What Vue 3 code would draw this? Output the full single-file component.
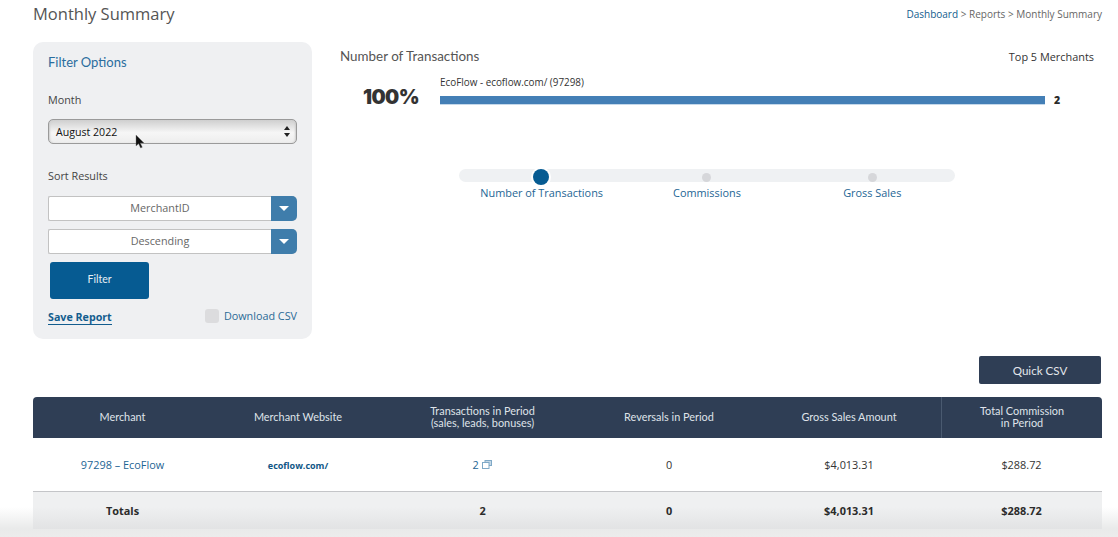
<template>
  <div class="page">
    <div class="fade"></div>
    <header class="top">
      <h1 class="page-title">Monthly Summary</h1>
      <div class="crumbs"><a>Dashboard</a> &gt; Reports &gt; Monthly Summary</div>
    </header>

    <section class="summary">
      <aside class="filter">
        <h2 class="filter-title">Filter Options</h2>
        <label class="field-label month-label">Month</label>
        <div class="month-select">
          <span>August 2022</span>
          <svg class="updown" width="6" height="11" viewBox="0 0 6 11">
            <path d="M3 0 6 4H0zM3 11 0 7h6z" fill="#222" />
          </svg>
          <svg class="cursor" width="10" height="15" viewBox="0 0 10 15">
            <path d="M1 0v11l2.6-2.3L5.6 13l1.7-.8-2-4.2H9z" fill="#111" stroke="#777" stroke-width=".4" />
          </svg>
        </div>
        <label class="field-label sort-label">Sort Results</label>
        <div v-for="s in sorts" :key="s" class="drop">
          <span class="drop-text">{{ s }}</span>
          <span class="drop-btn"><i class="tri"></i></span>
        </div>
        <button class="filter-btn">Filter</button>
        <div class="filter-foot">
          <a class="save">Save Report</a>
          <span class="csv"><i class="check"></i>Download CSV</span>
        </div>
      </aside>

      <div class="chart">
        <div class="chart-head">
          <h3 class="chart-title">Number of Transactions</h3>
          <span class="top-five">Top 5 Merchants</span>
        </div>
        <div class="bar-row">
          <div class="pct">100%</div>
          <div class="bar-wrap">
            <div class="bar-label">EcoFlow - ecoflow.com/ (97298)</div>
            <div class="bar-line">
              <div class="bar"></div>
              <b class="bar-num">2</b>
            </div>
          </div>
        </div>
        <div class="slider">
          <div class="track">
            <div v-for="(t, i) in tabs" :key="t" class="stop">
              <i :class="i === 0 ? 'dot on' : 'dot'"></i>
            </div>
          </div>
          <div class="stops">
            <a v-for="t in tabs" :key="t">{{ t }}</a>
          </div>
        </div>
      </div>
    </section>

    <div class="actions"><button class="quick">Quick CSV</button></div>

    <table class="report">
      <colgroup>
        <col style="width:179px" /><col style="width:172px" /><col style="width:197px" />
        <col style="width:176px" /><col style="width:184px" /><col style="width:161px" />
      </colgroup>
      <thead>
        <tr>
          <th>Merchant</th>
          <th>Merchant Website</th>
          <th>Transactions in Period<br />(sales, leads, bonuses)</th>
          <th>Reversals in Period</th>
          <th>Gross Sales Amount</th>
          <th class="last">Total Commission<br />in Period</th>
        </tr>
      </thead>
      <tbody>
        <tr>
          <td><a>97298 – EcoFlow</a></td>
          <td><a class="site">ecoflow.com/</a></td>
          <td>
            <a>2</a>
            <svg class="popout" width="10" height="9" viewBox="0 0 10 9" fill="none" stroke="#7fa9c7">
              <rect x="3" y=".5" width="6.5" height="5" fill="#c5d8e6" />
              <rect x=".5" y="2.5" width="6.5" height="6" fill="#fff" />
            </svg>
          </td>
          <td>0</td>
          <td>$4,013.31</td>
          <td>$288.72</td>
        </tr>
      </tbody>
      <tfoot>
        <tr>
          <td>Totals</td>
          <td></td>
          <td>2</td>
          <td>0</td>
          <td>$4,013.31</td>
          <td>$288.72</td>
        </tr>
      </tfoot>
    </table>
  </div>
</template>

<script setup>
const sorts = ['MerchantID', 'Descending']
const tabs = ['Number of Transactions', 'Commissions', 'Gross Sales']
</script>

<style>
html,
body {
  margin: 0;
  background: #fff;
  overflow: hidden;
}
</style>

<style scoped>
.page {
  height: 537px;
  box-sizing: border-box;
  padding: 0 16px 0 33px;
  font-family: "Open Sans", sans-serif;
  color: #333;
  overflow: hidden;
  position: relative;
}

.top {
  display: flex;
  justify-content: space-between;
  align-items: flex-start;
  height: 42px;
}

.page-title {
  margin: 3px 0 0;
  font-size: 16.5px;
  line-height: 22px;
  font-weight: 400;
  color: #555;
}

.crumbs {
  margin-top: 7px;
  font-size: 10px;
  line-height: 14px;
  color: #666;
}

.crumbs a {
  color: #135d8e;
}

.summary {
  display: flex;
  height: 297px;
}

.filter {
  width: 279px;
  box-sizing: border-box;
  padding: 11px 15px 0;
  background: #eff0f2;
  border-radius: 10px;
  flex-shrink: 0;
}

.filter-title {
  margin: 0;
  font-family: Lato, sans-serif;
  font-size: 13px;
  line-height: 18px;
  font-weight: 400;
  color: #2a6d9e;
}

.field-label {
  display: block;
  font-size: 10.8px;
  line-height: 14px;
  color: #444;
}

.month-label {
  margin-top: 22px;
}

.month-select {
  position: relative;
  display: flex;
  align-items: center;
  justify-content: space-between;
  height: 25px;
  margin-top: 12px;
  padding: 0 6px 0 7px;
  box-sizing: border-box;
  border: 1px solid #9a9a9a;
  border-radius: 5px;
  background: linear-gradient(#cfcfcf, #f6f6f6 55%, #ededed);
  box-shadow: inset 2px 0 2px -1px #ccc, inset -2px 0 2px -1px #ccc;
  font-size: 10.6px;
  color: #111;
}

.cursor {
  position: absolute;
  left: 86px;
  top: 15px;
}

.sort-label {
  margin-top: 25px;
  margin-bottom: 13px;
}

.drop {
  display: flex;
  height: 25px;
  margin-bottom: 8px;
  background: #fff;
  border: 1px solid #c2c2c2;
  border-right: 0;
  box-sizing: border-box;
  border-radius: 2px 5px 5px 2px;
}

.drop-text {
  flex: 1;
  text-align: center;
  font-size: 10.8px;
  line-height: 21px;
  color: #666;
}

.drop-btn {
  width: 26px;
  margin: -1px 0;
  display: flex;
  align-items: center;
  justify-content: center;
  background: #3f7dab;
  border-radius: 0 5px 5px 0;
}

.tri {
  border-left: 5px solid transparent;
  border-right: 5px solid transparent;
  border-top: 5px solid #fff;
}

.filter-btn {
  display: block;
  width: 99px;
  height: 37px;
  margin: 0 0 0 2px;
  padding: 0 0 3px;
  border: 0;
  border-radius: 3px;
  background: #065b92;
  color: #e8eef3;
  font-family: Lato, sans-serif;
  font-size: 10.5px;
}

.filter-foot {
  display: flex;
  justify-content: space-between;
  align-items: center;
  margin-top: 7px;
}

.save {
  margin-top: 4px;
  font-size: 10.7px;
  font-weight: 700;
  line-height: 14px;
  color: #135d8e;
  border-bottom: 1px solid #135d8e;
}

.csv {
  display: flex;
  align-items: center;
  font-size: 10.8px;
  color: #2b6a96;
}

.check {
  width: 14px;
  height: 14px;
  margin-right: 5px;
  border-radius: 3px;
  background: #dcdcde;
}

.chart {
  flex: 1;
  padding-left: 28px;
}

.chart-head {
  display: flex;
  justify-content: space-between;
  align-items: center;
  height: 18px;
  margin-top: 5px;
  padding-right: 8px;
}

.chart-title {
  margin: 0;
  font-family: Lato, sans-serif;
  font-size: 13.4px;
  font-weight: 400;
  color: #555;
}

.top-five {
  font-size: 10.9px;
  color: #333;
}

.bar-row {
  display: flex;
  margin-top: 11px;
}

.pct {
  width: 100px;
  box-sizing: border-box;
  padding: 8px 21px 0 23px;
  font-family: Inter, sans-serif;
  font-size: 20px;
  font-weight: 900;
  letter-spacing: -0.6px;
  line-height: 26px;
  color: #333;
  white-space: nowrap;
}

.bar-label {
  font-size: 9.9px;
  line-height: 13px;
  color: #333;
}

.bar-line {
  display: flex;
  align-items: center;
  margin-top: 4px;
}

.bar {
  width: 605px;
  height: 8px;
  background: #447fb6;
  box-shadow: 0 1px #c5d8ea;
}

.bar-num {
  margin-left: 9px;
  font-size: 10.5px;
  font-weight: 800;
  color: #2b2b2b;
}

.slider {
  width: 496px;
  margin: 59px 0 0 119px;
}

.track {
  display: grid;
  grid-template-columns: repeat(3, 1fr);
  height: 13px;
  background: #eff1f3;
  border-radius: 7px;
}

.stop {
  display: flex;
  align-items: center;
  justify-content: center;
}

.dot {
  width: 9px;
  height: 9px;
  border-radius: 50%;
  background: #d6d7da;
}

.dot.on {
  width: 16px;
  height: 16px;
  margin-right: 1px;
  background: #065b92;
  box-shadow: 0 0 0 2px #fff;
}

.stops {
  display: grid;
  grid-template-columns: repeat(3, 1fr);
  margin-top: 3px;
  text-align: center;
  font-size: 10.9px;
  line-height: 15px;
  color: #1d6594;
}

.actions {
  display: flex;
  justify-content: flex-end;
  height: 58px;
  padding-top: 17px;
  box-sizing: border-box;
  margin-right: 1px;
}

.quick {
  width: 122px;
  height: 28px;
  border: 0;
  border-radius: 2px;
  background: #2f3e55;
  color: #e4e7ec;
  font-family: Lato, sans-serif;
  font-size: 11.6px;
}

.report {
  position: relative;
  width: 1069px;
  table-layout: fixed;
  border-collapse: separate;
  border-spacing: 0;
  text-align: center;
  font-size: 10.9px;
}

.report th {
  height: 41px;
  padding: 0 0 1px;
  box-sizing: border-box;
  background: #2f3e55;
  color: #dfe3e9;
  font-family: Lato, sans-serif;
  font-size: 10.9px;
  line-height: 12px;
  font-weight: 400;
}

.report th:first-child {
  border-top-left-radius: 4px;
}

.report th.last {
  border-left: 1px solid #4a5a70;
  border-top-right-radius: 4px;
}

.report tbody td {
  height: 53px;
  padding: 0;
  color: #333;
}

.report a {
  color: #1d6594;
}

.report .site {
  font-size: 9px;
  font-weight: 700;
  color: #0f5686;
}

.popout {
  margin: 0 1px 0 3px;
  vertical-align: 0;
}

.report tfoot td {
  height: 37px;
  padding: 0;
  border-top: 1px solid #c4c5c8;
  background: linear-gradient(#eff0f1 40%, #e2e3e4);
  font-weight: 700;
  color: #2b2b2b;
}

.fade {
  position: absolute;
  left: 0;
  right: 0;
  bottom: 0;
  height: 30px;
  background: linear-gradient(rgba(233, 234, 234, 0), #e9eaea 72%, #ececec);
}
</style>
